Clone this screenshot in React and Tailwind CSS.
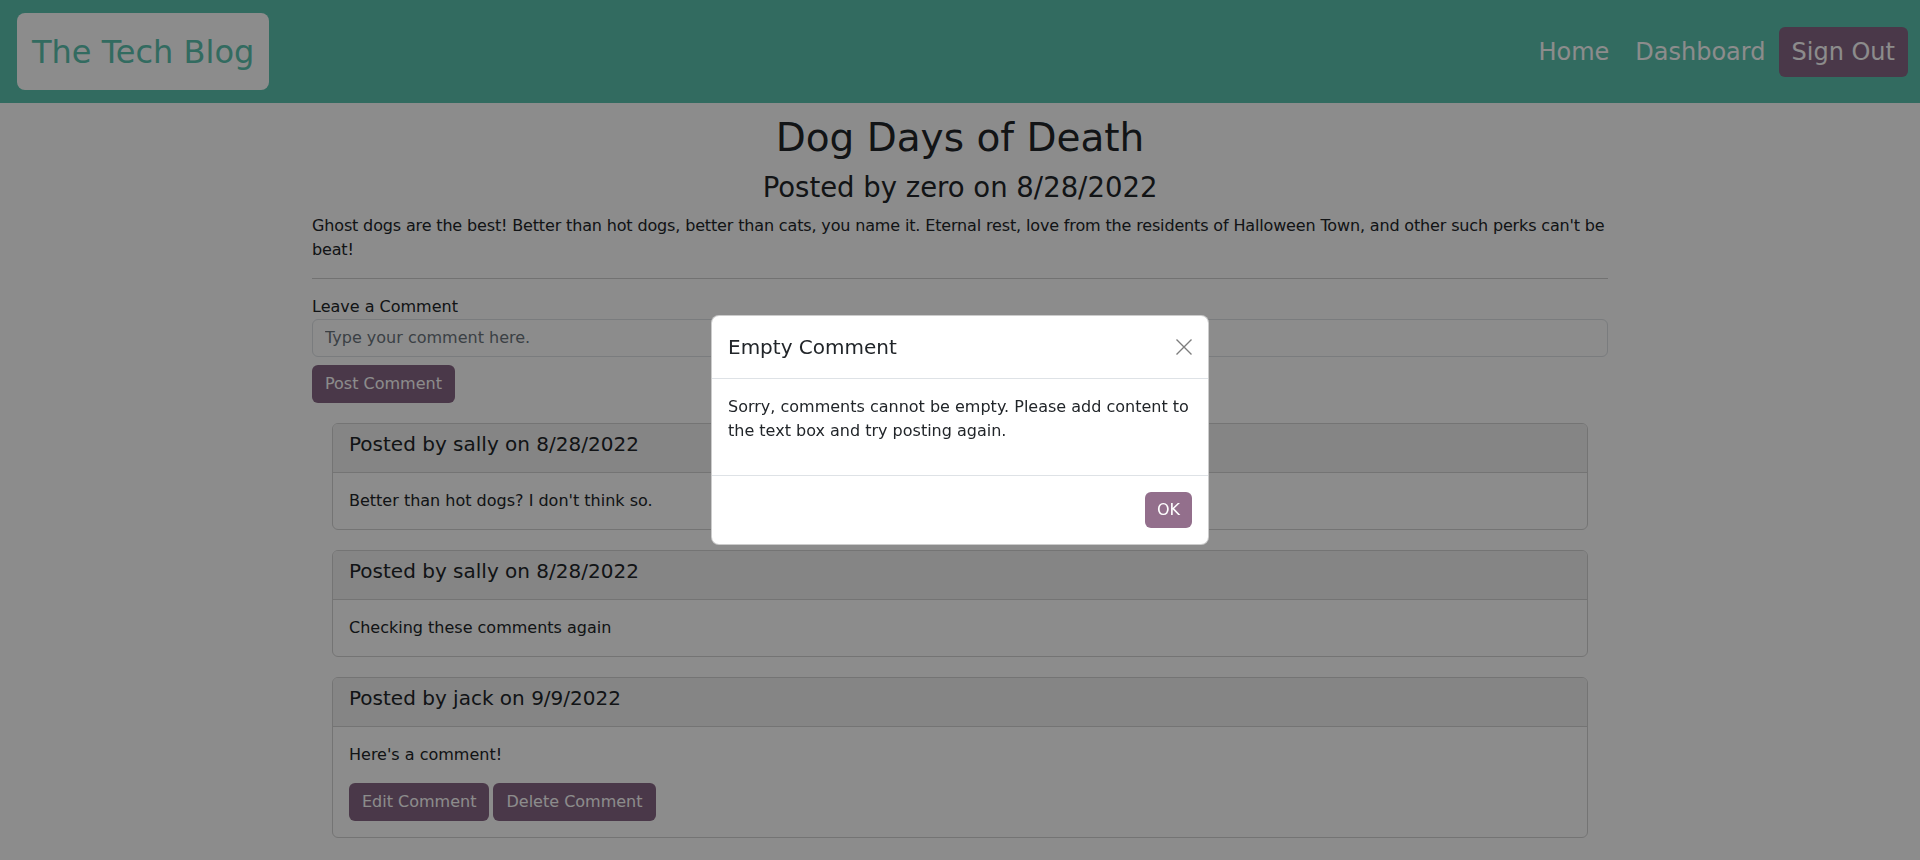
import React from 'react';

const comments = [
  { author: 'sally', date: '8/28/2022', body: 'Better than hot dogs? I don\'t think so.' },
  { author: 'sally', date: '8/28/2022', body: 'Checking these comments again' },
  { author: 'jack', date: '9/9/2022', body: 'Here\'s a comment!', mine: true },
];

const btn = 'inline-block px-3 py-1.5 text-base leading-6 border border-transparent rounded-md text-white bg-[#886685]';

const CommentCard = ({ author, date, body, mine }) => (
  <div className="mx-5 mt-5 border border-[#d4d4d4] rounded-md overflow-hidden">
    <div className="px-4 pt-2 pb-2 bg-[#f3f3f3] border-b border-[#d4d4d4]">
      <h5 className="text-[20px] leading-[1.2] mb-2">
        Posted by {author} on {date}
      </h5>
    </div>
    <div className="p-4">
      <p className={mine ? 'leading-6 mb-4' : 'leading-6'}>{body}</p>
      {mine && (
        <div className="flex gap-1">
          <button className={btn}>Edit Comment</button>
          <button className={btn}>Delete Comment</button>
        </div>
      )}
    </div>
  </div>
);

const App = () => (
  <div className="relative min-h-screen bg-white text-[#212529] font-['DejaVu_Sans',sans-serif]">
    <nav className="h-[103px] bg-[#5bc3af] flex items-center justify-between pl-[17px] pr-[12px]">
      <a className="h-[77px] flex items-center px-[15px] bg-white rounded-lg text-[32px] text-[#5bc3af]">
        The Tech Blog
      </a>
      <ul className="flex items-center text-[24px] text-white">
        <li><a className="block px-[13px] leading-[50px]">Home</a></li>
        <li><a className="block px-[13px] leading-[50px]">Dashboard</a></li>
        <li><a className="block px-[13px] leading-[50px] rounded-md bg-[#886685]">Sign Out</a></li>
      </ul>
    </nav>

    <main className="w-[1296px] mx-auto pt-[12px]">
      <h1 className="text-[39px] leading-[1.2] text-center mb-[9px]">Dog Days of Death</h1>
      <h3 className="text-[27.5px] leading-[1.2] text-center mb-[10px]">Posted by zero on 8/28/2022</h3>
      <p className="leading-6 mb-4 tracking-[-0.15px]">
        Ghost dogs are the best! Better than hot dogs, better than cats, you name it. Eternal rest, love from the residents of Halloween Town, and other such perks can't be beat!
      </p>
      <hr className="border-[#cfcfcf] mb-4" />

      <form>
        <label className="block leading-6">Leave a Comment</label>
        <input
          type="text"
          placeholder="Type your comment here."
          className="block w-full px-3 py-1.5 leading-6 border border-[#dee2e6] rounded-md placeholder:text-[#6c757d]"
        />
        <button type="button" className={`${btn} mt-2`}>Post Comment</button>
      </form>

      <div className="mt-[1px]">
        {comments.map((c, i) => <CommentCard key={i} {...c} />)}
      </div>
    </main>

    <div className="fixed inset-0 bg-black/45 flex items-center justify-center">
      <div className="w-[498px] bg-white rounded-lg border border-black/20">
        <div className="flex items-center justify-between p-4 border-b border-[#dee2e6]">
          <h5 className="text-[20px] leading-[1.5]">Empty Comment</h5>
          <button className="w-4 h-4 text-[#7d7d7d]">
            <svg viewBox="0 0 16 16" className="w-4 h-4" fill="none" stroke="currentColor" strokeWidth="1.4">
              <path d="M0.5 0.5l15 15M15.5 0.5l-15 15" />
            </svg>
          </button>
        </div>
        <div className="p-4">
          <p className="leading-6 mb-4">
            Sorry, comments cannot be empty. Please add content to the text box and try posting again.
          </p>
        </div>
        <div className="flex justify-end p-3 border-t border-[#dee2e6]">
          <button className="m-1 px-3 py-1.5 leading-6 rounded-md text-white bg-[#936f8c]">OK</button>
        </div>
      </div>
    </div>
  </div>
);

export default App;
